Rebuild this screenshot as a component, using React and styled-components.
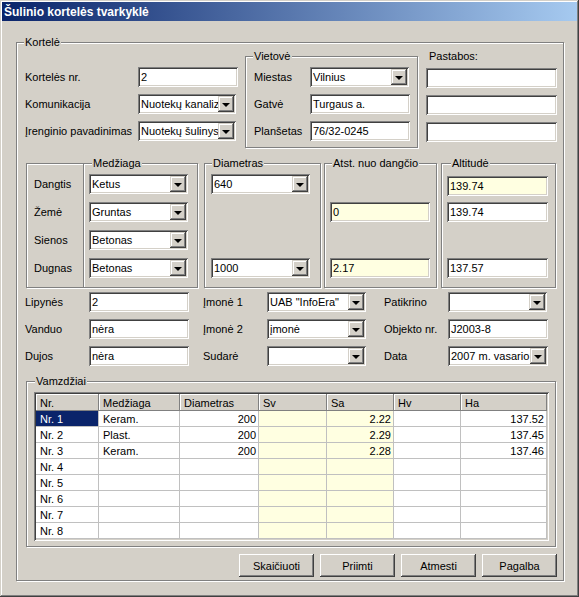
import React from "react";
import styled, { createGlobalStyle } from "styled-components";

const GlobalStyle = createGlobalStyle`
  html, body { margin: 0; padding: 0; background: #d4d0c8; }
  body {
    font-family: "Liberation Sans", Arial, sans-serif;
    font-size: 11px;
    color: #000;
  }
`;

const Window = styled.div`
  width: 579px;
  height: 597px;
  box-sizing: border-box;
  padding: 2px;
  background: #d4d0c8;
  display: flex;
  flex-direction: column;
  box-shadow: inset -1px -1px #404040, inset 1px 1px #d4d0c8,
    inset -2px -2px #808080, inset 2px 2px #fff;
`;

const TitleBar = styled.div`
  height: 19px;
  display: flex;
  align-items: center;
  padding-left: 2px;
  background: linear-gradient(to right, #0a246a, #a6caf0);
  color: #fff;
  font-weight: bold;
  font-size: 12px;
`;

const Group = styled.div`
  position: relative;
  box-sizing: border-box;
  border: 1px solid #808080;
  box-shadow: inset 1px 1px 0 #fff, 1px 1px 0 #fff;
  width: ${(p) => p.$w}px;
  height: ${(p) => p.$h}px;
  ${(p) => (p.$noLeft ? "border-left: none;" : "")}
`;

const Legend = styled.span`
  position: absolute;
  top: -7px;
  left: ${(p) => p.$left ?? 7}px;
  padding: 0 1px;
  line-height: 13px;
  background: #d4d0c8;
  white-space: nowrap;
`;

const MainGroup = styled(Group)`
  margin: 21px 0 0 14px;
  padding: 13px 0 0 8px;
  display: flex;
  flex-direction: column;
`;

const TopSection = styled.div`
  display: flex;
  align-items: flex-start;
`;

const Column = styled.div`
  display: flex;
  flex-direction: column;
  gap: 7px;
  width: ${(p) => p.$w}px;
  margin-top: ${(p) => p.$mt || 0}px;
  margin-left: ${(p) => p.$ml || 0}px;
`;

const Row = styled.div`
  display: flex;
  align-items: center;
  height: 20px;
`;

const Label = styled.span`
  width: ${(p) => p.$w}px;
  flex: none;
  white-space: nowrap;
`;

const NotesLabel = styled.span`
  line-height: 13px;
  margin-left: 3px;
`;

const U = styled.span`
  text-decoration: underline;
`;

const Field = styled.div`
  box-sizing: border-box;
  width: ${(p) => p.$w || 100}px;
  height: 20px;
  padding: 0 3px;
  display: flex;
  align-items: center;
  justify-content: space-between;
  background: ${(p) => (p.$yellow ? "#ffffe1" : "#fff")};
  box-shadow: inset 1px 1px #808080, inset -1px -1px #fff,
    inset 2px 2px #404040, inset -2px -2px #d4d0c8;
  white-space: nowrap;
  overflow: hidden;
  flex: none;
  margin-top: ${(p) => p.$mt || 0}px;
`;

const ComboBox = styled(Field)`
  padding: 2px 2px 2px 3px;
`;

const ComboText = styled.span`
  overflow: hidden;
  white-space: nowrap;
  flex: 1;
`;

const DropButton = styled.span`
  width: 16px;
  height: 16px;
  flex: none;
  box-sizing: border-box;
  background: #d4d0c8;
  display: flex;
  align-items: center;
  justify-content: center;
  box-shadow: inset -1px -1px #404040, inset 1px 1px #d4d0c8,
    inset -2px -2px #808080, inset 2px 2px #fff;

  &::after {
    content: "";
    width: 0;
    height: 0;
    margin-top: 1px;
    border-left: 4px solid transparent;
    border-right: 4px solid transparent;
    border-top: 4px solid #000;
  }
`;

const Combo = ({ w, children }) => (
  <ComboBox $w={w}>
    <ComboText>{children}</ComboText>
    <DropButton />
  </ComboBox>
);

const MidSection = styled.div`
  display: flex;
  margin: 15px 0 0 1px;
`;

const Frame = styled(Group)`
  padding: 10px 0 0 ${(p) => p.$pl}px;
  margin-left: ${(p) => p.$ml || 0}px;
  display: flex;
  flex-direction: column;
  gap: 8px;
`;

const Slot = styled.div`
  height: 20px;
  display: flex;
  align-items: center;
`;

const FieldsGrid = styled.div`
  display: grid;
  grid-template-columns: 64px 100px 14px 64px 99px 18px 64px 100px;
  grid-auto-rows: 20px;
  row-gap: 7px;
  align-items: center;
  margin-top: 4px;
`;

const PipesGroup = styled(Group)`
  margin: 15px 0 0 1px;
  padding: 10px 0 0 7px;
`;

const TableFrame = styled.div`
  box-sizing: border-box;
  width: 515px;
  height: 149px;
  padding: 2px;
  background: #fff;
  box-shadow: inset 1px 1px #808080, inset -1px -1px #fff,
    inset 2px 2px #404040, inset -2px -2px #d4d0c8;
`;

const Table = styled.div`
  display: grid;
  grid-template-columns: 63px 81px 79px 68px 67px 67px 86px;
  grid-template-rows: 17px repeat(8, 16px);
`;

const HeadCell = styled.div`
  box-sizing: border-box;
  background: #d4d0c8;
  padding-left: 4px;
  display: flex;
  align-items: center;
  box-shadow: inset -1px -1px #808080, inset 1px 1px #fff;
`;

const Cell = styled.div`
  box-sizing: border-box;
  border-right: 1px solid #c0c0c0;
  border-bottom: 1px solid #c0c0c0;
  display: flex;
  align-items: center;
  justify-content: ${(p) => (p.$right ? "flex-end" : "flex-start")};
  padding: ${(p) => (p.$right ? "0 2px 0 0" : "0 0 0 4px")};
  background: ${(p) => (p.$sel ? "#0a246a" : p.$yellow ? "#ffffe1" : "#fff")};
  color: ${(p) => (p.$sel ? "#fff" : "#000")};
`;

const ButtonRow = styled.div`
  width: 532px;
  display: flex;
  justify-content: flex-end;
  gap: 6px;
  margin-top: 7px;
`;

const Button = styled.button`
  width: 75px;
  height: 23px;
  border: none;
  padding: 0;
  background: #d4d0c8;
  font-family: inherit;
  font-size: 11px;
  color: #000;
  box-shadow: inset -1px -1px #404040, inset 1px 1px #fff,
    inset -2px -2px #808080, inset 2px 2px #d4d0c8;
`;

const columns = [
  { title: "Nr." },
  { title: "Medžiaga" },
  { title: "Diametras", right: true },
  { title: "Sv", right: true, yellow: true },
  { title: "Sa", right: true, yellow: true },
  { title: "Hv", right: true },
  { title: "Ha", right: true },
];

const pipes = [
  ["Nr. 1", "Keram.", "200", "", "2.22", "", "137.52"],
  ["Nr. 2", "Plast.", "200", "", "2.29", "", "137.45"],
  ["Nr. 3", "Keram.", "200", "", "2.28", "", "137.46"],
  ["Nr. 4", "", "", "", "", "", ""],
  ["Nr. 5", "", "", "", "", "", ""],
  ["Nr. 6", "", "", "", "", "", ""],
  ["Nr. 7", "", "", "", "", "", ""],
  ["Nr. 8", "", "", "", "", "", ""],
];

export default function App() {
  return (
    <>
      <GlobalStyle />
      <Window>
        <TitleBar>Šulinio kortelės tvarkyklė</TitleBar>
        <MainGroup $w={548} $h={539}>
          <Legend>Kortelė</Legend>
          <TopSection>
            <Column $w={213} $mt={11}>
              <Row>
                <Label $w={113}>Kortelės nr.</Label>
                <Field>2</Field>
              </Row>
              <Row>
                <Label $w={113}>Komunikacija</Label>
                <Combo w={98}>Nuotekų kanaliz</Combo>
              </Row>
              <Row>
                <Label $w={113}>
                  <U>Į</U>renginio pavadinimas
                </Label>
                <Combo w={98}>Nuotekų šulinys</Combo>
              </Row>
            </Column>
            <Group $w={173} $h={92} style={{ marginLeft: 7 }}>
              <Legend>Vietovė</Legend>
              <Column $w={170} $mt={10} $ml={8}>
                <Row>
                  <Label $w={56}>Miestas</Label>
                  <Combo w={99}>Vilnius</Combo>
                </Row>
                <Row>
                  <Label $w={56}>Gatvė</Label>
                  <Field>Turgaus a.</Field>
                </Row>
                <Row>
                  <Label $w={56}>Planšetas</Label>
                  <Field>76/32-0245</Field>
                </Row>
              </Column>
            </Group>
            <Column $w={131} $mt={-6} $ml={8} style={{ gap: 0 }}>
              <NotesLabel>Pastabos:</NotesLabel>
              <Field $w={131} $mt={5} />
              <Field $w={131} $mt={7} />
              <Field $w={131} $mt={7} />
            </Column>
          </TopSection>

          <MidSection>
            <Frame $w={58} $h={125} $pl={7}>
              <Slot>Dangtis</Slot>
              <Slot>Žemė</Slot>
              <Slot>Sienos</Slot>
              <Slot>Dugnas</Slot>
            </Frame>
            <Frame $w={114} $h={125} $pl={5} $noLeft>
              <Legend $left={8}>Medžiaga</Legend>
              <Slot><Combo w={99}>Ketus</Combo></Slot>
              <Slot><Combo w={99}>Gruntas</Combo></Slot>
              <Slot><Combo w={99}>Betonas</Combo></Slot>
              <Slot><Combo w={99}>Betonas</Combo></Slot>
            </Frame>
            <Frame $w={117} $h={125} $pl={6} $ml={6}>
              <Legend>Diametras</Legend>
              <Slot><Combo w={99}>640</Combo></Slot>
              <Slot />
              <Slot />
              <Slot><Combo w={99}>1000</Combo></Slot>
            </Frame>
            <Frame $w={113} $h={125} $pl={5} $ml={3}>
              <Legend>Atst. nuo dangčio</Legend>
              <Slot />
              <Slot><Field $yellow>0</Field></Slot>
              <Slot />
              <Slot><Field $yellow>2.17</Field></Slot>
            </Frame>
            <Frame $w={115} $h={125} $pl={5} $ml={4}>
              <Legend $left={9}>Altitudė</Legend>
              <Slot><Field $w={101} $yellow $mt={4}>139.74</Field></Slot>
              <Slot><Field $w={101}>139.74</Field></Slot>
              <Slot />
              <Slot><Field $w={101}>137.57</Field></Slot>
            </Frame>
          </MidSection>

          <FieldsGrid>
            <span>Lipynės</span>
            <Field>2</Field>
            <span />
            <span><U>Į</U>monė 1</span>
            <Combo w={99}>UAB "InfoEra"</Combo>
            <span />
            <span>Patikrino</span>
            <Combo w={99} />

            <span>Vanduo</span>
            <Field>nėra</Field>
            <span />
            <span><U>Į</U>monė 2</span>
            <Combo w={99}>įmonė</Combo>
            <span />
            <span>Objekto nr.</span>
            <Field>J2003-8</Field>

            <span>Dujos</span>
            <Field>nėra</Field>
            <span />
            <span>Sudarė</span>
            <Combo w={99} />
            <span />
            <span>Data</span>
            <Combo w={100}>2007 m. vasario</Combo>
          </FieldsGrid>

          <PipesGroup $w={530} $h={166}>
            <Legend $left={8}>Vamzdžiai</Legend>
            <TableFrame>
              <Table>
                {columns.map((c) => (
                  <HeadCell key={c.title}>{c.title}</HeadCell>
                ))}
                {pipes.map((row, r) =>
                  row.map((v, i) => (
                    <Cell
                      key={`${r}-${i}`}
                      $right={columns[i].right}
                      $yellow={columns[i].yellow}
                      $sel={r === 0 && i === 0}
                    >
                      {v}
                    </Cell>
                  ))
                )}
              </Table>
            </TableFrame>
          </PipesGroup>

          <ButtonRow>
            <Button>Skaičiuoti</Button>
            <Button>Priimti</Button>
            <Button>Atmesti</Button>
            <Button>Pagalba</Button>
          </ButtonRow>
        </MainGroup>
      </Window>
    </>
  );
}
